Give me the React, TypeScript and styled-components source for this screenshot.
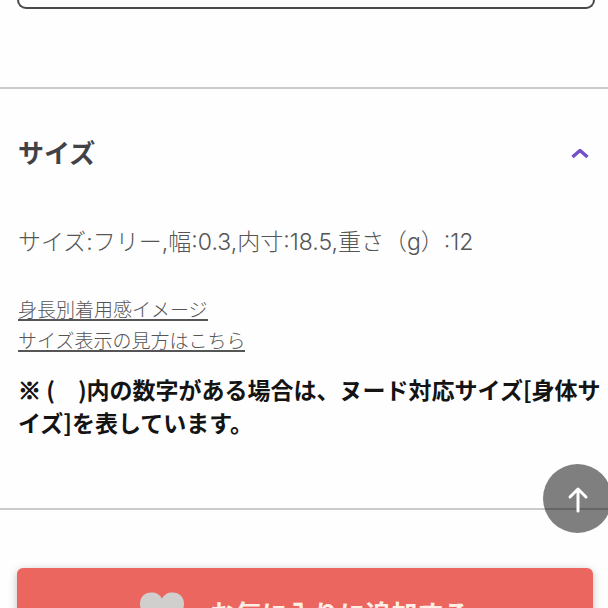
import React, { useState } from "react";
import styled, { createGlobalStyle } from "styled-components";

const GlobalStyle = createGlobalStyle`
  * { box-sizing: border-box; }
  html { scrollbar-width: none; }
  body {
    margin: 0;
    overflow-x: hidden;
    background: #fefefe;
    color: #555;
    font-family: Inter, "Noto Sans CJK JP", sans-serif;
  }
  button { font: inherit; border: 0; padding: 0; cursor: pointer; }
`;

const Page = styled.main`
  display: flex;
  flex-direction: column;
  height: 100vh;
  overflow: hidden;
`;

const PreviousPanel = styled.div`
  flex: none;
  height: 9px;
  margin: 0 13px 78px 17px;
  border: 2px solid #4a4a4e;
  border-top: 0;
  border-radius: 0 0 10px 10px;
`;

const SizeSection = styled.section`
  flex: none;
  border-top: 2px solid #cbcbcb;
  border-bottom: 2px solid #cbcbcb;
  padding: 47px 4px 69px 18px;
`;

const SectionTitle = styled.h2`
  margin: 0;
  font-size: 26px;
  line-height: 36px;
  font-weight: 700;
`;

const Toggle = styled.button`
  display: flex;
  align-items: center;
  justify-content: space-between;
  width: 100%;
  padding-right: 12px;
  background: none;
  color: #424246;
  text-align: left;
`;

const Specs = styled.p`
  margin: 54px 0 44px;
  font-size: 23px;
  line-height: 32px;
  font-weight: 300;
`;

const Links = styled.nav`
  display: flex;
  flex-direction: column;
  align-items: flex-start;
  gap: 12px;
`;

const GuideLink = styled.a`
  border-bottom: 2px solid #555;
  color: #555;
  font-size: 19px;
  line-height: 17px;
  font-weight: 300;
  text-decoration: none;
`;

const Note = styled.p`
  margin: 21px 0 0;
  color: #141414;
  font-family: "Noto Sans CJK JP", sans-serif;
  font-size: 23px;
  line-height: 33px;
  font-weight: 700;
`;

const NoteMark = styled.span`
  -webkit-text-stroke: 1px currentColor;
`;

const FavoriteButton = styled.button`
  flex: none;
  display: flex;
  align-items: center;
  justify-content: center;
  gap: 25px;
  height: 88px;
  margin: 58px 15px 0 17px;
  border-radius: 6px;
  background: #ec6660;
  box-shadow: 0 2px 8px rgba(0, 0, 0, 0.25);
  color: #fdeee6;
  && { font-size: 26px; font-weight: 700; }
`;

const ScrollTop = styled.button`
  position: fixed;
  right: -4px;
  bottom: 75px;
  display: grid;
  place-items: center;
  width: 69px;
  height: 69px;
  border-radius: 50%;
  background: rgba(0, 0, 0, 0.5);
`;

export default function App() {
  const [open, setOpen] = useState(true);
  return (
    <>
      <GlobalStyle />
      <Page>
        <PreviousPanel />
        <SizeSection>
          <SectionTitle>
            <Toggle aria-expanded={open} onClick={() => setOpen(!open)}>
              サイズ
              <svg width="24" height="20" viewBox="0 0 24 20" fill="none" aria-hidden="true">
                <path
                  d={open ? "M4.500 13L12 6.500L19.500 13" : "M4.500 6.500L12 13L19.500 6.500"}
                  stroke="#7350c8"
                  strokeWidth="3.500"
                  strokeLinejoin="round"
                />
              </svg>
            </Toggle>
          </SectionTitle>
          {open && (
            <>
              <Specs>サイズ:フリー,幅:0.3,内寸:18.5,重さ（g）:12</Specs>
              <Links>
                <GuideLink href="#height">身長別着用感イメージ</GuideLink>
                <GuideLink href="#guide">サイズ表示の見方はこちら</GuideLink>
              </Links>
              <Note>
                <NoteMark>※</NoteMark> (　)内の数字がある場合は、ヌード対応サイズ[身体サイズ]を表しています。
              </Note>
            </>
          )}
        </SizeSection>
        <FavoriteButton>
          <svg width="44" height="40" viewBox="0 0 45 40" aria-hidden="true">
            <path
              d="M22.500 39C14 33 0 24 0 11.500C0 4.500 5 0 11.500 0C16.500 0 20.500 2 22.500 6.500C24.500 2 28.500 0 33.500 0C40 0 45 4.500 45 11.500C45 24 31 33 22.500 39Z"
              fill="#d0cfce"
            />
          </svg>
          お気に入りに追加する
        </FavoriteButton>
        <ScrollTop
          aria-label="ページの先頭へ"
          onClick={() => window.scrollTo({ top: 0, behavior: "smooth" })}
        >
          <svg width="24" height="28" viewBox="0 0 24 28" fill="none" aria-hidden="true">
            <path
              d="M12 26V4M4 12L12 4L20 12"
              stroke="#fff"
              strokeWidth="3"
              strokeLinecap="round"
              strokeLinejoin="round"
            />
          </svg>
        </ScrollTop>
      </Page>
    </>
  );
}
